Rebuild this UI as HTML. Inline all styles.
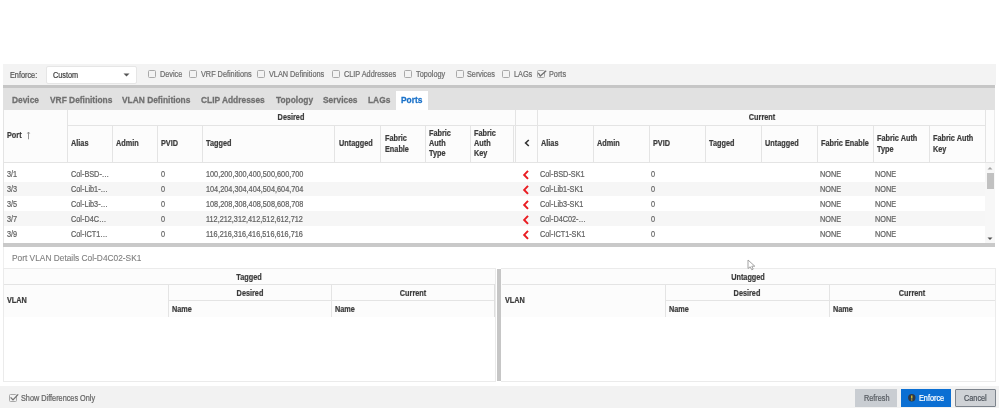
<!DOCTYPE html>
<html><head><meta charset="utf-8">
<style>
*{box-sizing:border-box;margin:0;padding:0}
html,body{width:999px;height:408px;overflow:hidden;background:#fff;font-family:"Liberation Sans",sans-serif}
body{filter:blur(0.45px)}
.a{position:absolute}
.t{-webkit-text-stroke:0.2px currentColor;will-change:transform;position:absolute;white-space:nowrap;font-size:7.3px;line-height:10px;color:#646464;transform:scaleY(1.18);transform-origin:0 0}
.h{-webkit-text-stroke:0.2px currentColor;will-change:transform;position:absolute;white-space:nowrap;font-size:7.3px;line-height:10px;color:#3c3c3c;font-weight:bold;transform:scaleY(1.18);transform-origin:0 0}
.hc{transform-origin:50% 0;text-align:center}
.tab{-webkit-text-stroke:0.25px currentColor;will-change:transform;position:absolute;white-space:nowrap;font-size:8.4px;line-height:12px;color:#707070;font-weight:bold;transform:scaleY(1.15);transform-origin:0 0}
.vl{position:absolute;width:1px;background:#e4e4e4}
.hl{position:absolute;height:1px;background:#e4e4e4}
.cb{position:absolute;width:8px;height:7.8px;border:1px solid #a9a9a9;border-radius:1.5px;background:transparent}
.stripe{position:absolute;left:4px;width:981px;background:#f6f6f6}
</style></head><body>
<div class="a" style="left:3px;top:63.5px;width:992.5px;height:21.5px;background:#f3f3f3;"></div>
<div class="t" style="left:10.3px;top:70px;color:#555;">Enforce:</div>
<div class="a" style="left:46px;top:65.5px;width:90.5px;height:18px;background:#fff;border:1px solid #e6e6e6;border-radius:2px"></div>
<div class="t" style="left:52.5px;top:70px;color:#444;">Custom</div>
<svg class="a" style="left:123px;top:73px" width="7" height="4"><path d="M0.5 0.5 L6.5 0.5 L3.5 3.5Z" fill="#555"/></svg>
<div class="cb" style="left:147.5px;top:70.2px"></div>
<div class="t" style="left:159.6px;top:69px;color:#6e6e6e;">Device</div>
<div class="cb" style="left:188.5px;top:70.2px"></div>
<div class="t" style="left:200.6px;top:69px;color:#6e6e6e;">VRF Definitions</div>
<div class="cb" style="left:257px;top:70.2px"></div>
<div class="t" style="left:269px;top:69px;color:#6e6e6e;">VLAN Definitions</div>
<div class="cb" style="left:332px;top:70.2px"></div>
<div class="t" style="left:344px;top:69px;color:#6e6e6e;">CLIP Addresses</div>
<div class="cb" style="left:403.7px;top:70.2px"></div>
<div class="t" style="left:416px;top:69px;color:#6e6e6e;">Topology</div>
<div class="cb" style="left:455.5px;top:70.2px"></div>
<div class="t" style="left:467px;top:69px;color:#6e6e6e;">Services</div>
<div class="cb" style="left:502px;top:70.2px"></div>
<div class="t" style="left:513.5px;top:69px;color:#6e6e6e;">LAGs</div>
<div class="cb" style="left:537px;top:70.2px"></div>
<div class="t" style="left:548.5px;top:69px;color:#6e6e6e;">Ports</div>
<svg class="a" style="left:536px;top:69px" width="12" height="9"><path d="M2.3 3.9 L4.3 7 L10.2 1.8" fill="none" stroke="#707070" stroke-width="1.25"/></svg>
<div class="a" style="left:3px;top:85px;width:992px;height:3px;background:#c6c6c6;"></div>
<div class="a" style="left:3px;top:88px;width:992px;height:22px;background:#e1e1e1;"></div>
<div class="a" style="left:396px;top:90.7px;width:31.5px;height:19.3px;background:#fff;"></div>
<div class="tab" style="left:12px;top:93px">Device</div>
<div class="tab" style="left:49.5px;top:93px">VRF Definitions</div>
<div class="tab" style="left:122px;top:93px">VLAN Definitions</div>
<div class="tab" style="left:201px;top:93px">CLIP Addresses</div>
<div class="tab" style="left:276px;top:93px">Topology</div>
<div class="tab" style="left:323px;top:93px">Services</div>
<div class="tab" style="left:368px;top:93px">LAGs</div>
<div class="tab" style="left:401px;top:93px;color:#1b72c9">Ports</div>
<div class="a" style="left:3px;top:110px;width:992px;height:133.5px;background:#fff;"></div>
<div class="a" style="left:3px;top:110px;width:992px;height:53px;background:#fcfcfc;"></div>
<div class="vl" style="left:3px;top:110px;height:134px;"></div>
<div class="hl" style="left:67px;top:125px;width:918px;"></div>
<div class="hl" style="left:3px;top:162px;width:992px;"></div>
<div class="vl" style="left:67px;top:110px;height:53px;"></div>
<div class="vl" style="left:112px;top:125px;height:38px;"></div>
<div class="vl" style="left:157px;top:125px;height:38px;"></div>
<div class="vl" style="left:202px;top:125px;height:38px;"></div>
<div class="vl" style="left:334px;top:125px;height:38px;"></div>
<div class="vl" style="left:380px;top:125px;height:38px;"></div>
<div class="vl" style="left:425px;top:125px;height:38px;"></div>
<div class="vl" style="left:470px;top:125px;height:38px;"></div>
<div class="vl" style="left:513px;top:125px;height:38px;"></div>
<div class="vl" style="left:593px;top:125px;height:38px;"></div>
<div class="vl" style="left:649px;top:125px;height:38px;"></div>
<div class="vl" style="left:705px;top:125px;height:38px;"></div>
<div class="vl" style="left:761px;top:125px;height:38px;"></div>
<div class="vl" style="left:817px;top:125px;height:38px;"></div>
<div class="vl" style="left:873px;top:125px;height:38px;"></div>
<div class="vl" style="left:929px;top:125px;height:38px;"></div>
<div class="vl" style="left:515px;top:110px;height:53px;"></div>
<div class="vl" style="left:537px;top:110px;height:53px;"></div>
<div class="vl" style="left:985px;top:110px;height:53px;"></div>
<div class="vl" style="left:994px;top:110px;height:53px;background:#ececec"></div>
<div class="h" style="left:7.1px;top:130px;">Port</div>
<svg class="a" style="left:25.8px;top:130.8px" width="5" height="9"><path d="M2.5 1 V8.3 M1.3 2.6 L2.5 1 L3.7 2.6" fill="none" stroke="#888" stroke-width="0.9"/></svg>
<div class="h hc" style="left:191px;top:112px;width:200px;">Desired</div>
<div class="h hc" style="left:661.5px;top:112px;width:200px;">Current</div>
<div class="h" style="left:71px;top:138px;">Alias</div>
<div class="h" style="left:115.6px;top:138px;">Admin</div>
<div class="h" style="left:161px;top:138px;">PVID</div>
<div class="h" style="left:206px;top:138px;">Tagged</div>
<div class="h" style="left:339px;top:138px;">Untagged</div>
<div class="h" style="left:540.5px;top:138px;">Alias</div>
<div class="h" style="left:596.5px;top:138px;">Admin</div>
<div class="h" style="left:653px;top:138px;">PVID</div>
<div class="h" style="left:709px;top:138px;">Tagged</div>
<div class="h" style="left:765px;top:138px;">Untagged</div>
<div class="h" style="left:821px;top:138px;">Fabric Enable</div>
<div class="h" style="left:384.5px;top:133px;">Fabric</div>
<div class="h" style="left:384.5px;top:143.5px;">Enable</div>
<div class="h" style="left:429.3px;top:127.5px;">Fabric</div>
<div class="h" style="left:429.3px;top:137.95px;">Auth</div>
<div class="h" style="left:429.3px;top:148.4px;">Type</div>
<div class="h" style="left:474px;top:127.5px;">Fabric</div>
<div class="h" style="left:474px;top:137.95px;">Auth</div>
<div class="h" style="left:474px;top:148.4px;">Key</div>
<div class="h" style="left:877px;top:133px;">Fabric Auth</div>
<div class="h" style="left:877px;top:143.5px;">Type</div>
<div class="h" style="left:933px;top:133px;">Fabric Auth</div>
<div class="h" style="left:933px;top:143.5px;">Key</div>
<svg class="a" style="left:524px;top:139px" width="6" height="8"><path d="M4.8 1 L1.6 4 L4.8 7" fill="none" stroke="#333" stroke-width="1.6"/></svg>
<div class="stripe" style="top:181.8px;height:14.6px"></div>
<div class="stripe" style="top:211.4px;height:14.7px"></div>
<div class="t" style="left:7px;top:169px;">3/1</div>
<div class="t" style="left:71px;top:169px;">Col-BSD-…</div>
<div class="t" style="left:160.6px;top:169px;">0</div>
<div class="t" style="left:206px;top:169px;">100,200,300,400,500,600,700</div>
<svg class="a" style="left:522px;top:169.6px" width="8" height="10"><path d="M6 0.9 L2.2 4.9 L6 8.9" fill="none" stroke="#ea1c22" stroke-width="2"/></svg>
<div class="t" style="left:540.3px;top:169px;">Col-BSD-SK1</div>
<div class="t" style="left:651.1px;top:169px;">0</div>
<div class="t" style="left:819.5px;top:169px;">NONE</div>
<div class="t" style="left:875.1px;top:169px;">NONE</div>
<div class="t" style="left:7px;top:184px;">3/3</div>
<div class="t" style="left:71px;top:184px;">Col-Lib1-…</div>
<div class="t" style="left:160.6px;top:184px;">0</div>
<div class="t" style="left:206px;top:184px;">104,204,304,404,504,604,704</div>
<svg class="a" style="left:522px;top:184.6px" width="8" height="10"><path d="M6 0.9 L2.2 4.9 L6 8.9" fill="none" stroke="#ea1c22" stroke-width="2"/></svg>
<div class="t" style="left:540.3px;top:184px;">Col-Lib1-SK1</div>
<div class="t" style="left:651.1px;top:184px;">0</div>
<div class="t" style="left:819.5px;top:184px;">NONE</div>
<div class="t" style="left:875.1px;top:184px;">NONE</div>
<div class="t" style="left:7px;top:199px;">3/5</div>
<div class="t" style="left:71px;top:199px;">Col-Lib3-…</div>
<div class="t" style="left:160.6px;top:199px;">0</div>
<div class="t" style="left:206px;top:199px;">108,208,308,408,508,608,708</div>
<svg class="a" style="left:522px;top:199.6px" width="8" height="10"><path d="M6 0.9 L2.2 4.9 L6 8.9" fill="none" stroke="#ea1c22" stroke-width="2"/></svg>
<div class="t" style="left:540.3px;top:199px;">Col-Lib3-SK1</div>
<div class="t" style="left:651.1px;top:199px;">0</div>
<div class="t" style="left:819.5px;top:199px;">NONE</div>
<div class="t" style="left:875.1px;top:199px;">NONE</div>
<div class="t" style="left:7px;top:214px;">3/7</div>
<div class="t" style="left:71px;top:214px;">Col-D4C…</div>
<div class="t" style="left:160.6px;top:214px;">0</div>
<div class="t" style="left:206px;top:214px;">112,212,312,412,512,612,712</div>
<svg class="a" style="left:522px;top:214.6px" width="8" height="10"><path d="M6 0.9 L2.2 4.9 L6 8.9" fill="none" stroke="#ea1c22" stroke-width="2"/></svg>
<div class="t" style="left:540.3px;top:214px;">Col-D4C02-…</div>
<div class="t" style="left:651.1px;top:214px;">0</div>
<div class="t" style="left:819.5px;top:214px;">NONE</div>
<div class="t" style="left:875.1px;top:214px;">NONE</div>
<div class="t" style="left:7px;top:229px;">3/9</div>
<div class="t" style="left:71px;top:229px;">Col-ICT1…</div>
<div class="t" style="left:160.6px;top:229px;">0</div>
<div class="t" style="left:206px;top:229px;">116,216,316,416,516,616,716</div>
<svg class="a" style="left:522px;top:229.6px" width="8" height="10"><path d="M6 0.9 L2.2 4.9 L6 8.9" fill="none" stroke="#ea1c22" stroke-width="2"/></svg>
<div class="t" style="left:540.3px;top:229px;">Col-ICT1-SK1</div>
<div class="t" style="left:651.1px;top:229px;">0</div>
<div class="t" style="left:819.5px;top:229px;">NONE</div>
<div class="t" style="left:875.1px;top:229px;">NONE</div>
<div class="a" style="left:985px;top:163px;width:10px;height:80.5px;background:#f7f7f7;"></div>
<div class="a" style="left:986.5px;top:173px;width:7px;height:15.7px;background:#c1c1c1;"></div>
<svg class="a" style="left:987px;top:166px" width="6" height="4"><path d="M0.5 3.5 L3 1 L5.5 3.5Z" fill="#a3a3a3"/></svg>
<svg class="a" style="left:987px;top:236.5px" width="6" height="4"><path d="M0.5 0.5 L3 3 L5.5 0.5Z" fill="#505050"/></svg>
<div class="a" style="left:3px;top:243.4px;width:992px;height:3.3px;background:#c9c9c9;"></div>
<div class="vl" style="left:3px;top:246.7px;height:21.5px;background:#efefef"></div>
<div class="a" style="will-change:transform;left:12.2px;top:251px;font-size:8.35px;line-height:12px;color:#7e7e7e;-webkit-text-stroke:0.1px currentColor;white-space:nowrap;transform:scaleY(1.15);transform-origin:0 0">Port VLAN Details Col-D4C02-SK1</div>
<div class="a" style="left:3px;top:268px;width:492.8px;height:113.5px;background:transparent;border:1px solid #ebebeb;"></div>
<div class="a" style="left:4px;top:269px;width:490.8px;height:48px;background:#fcfcfc;"></div>
<div class="hl" style="left:4px;top:284px;width:490.8px;"></div>
<div class="hl" style="left:168px;top:300px;width:326.8px;"></div>
<div class="vl" style="left:168px;top:284px;height:33px;"></div>
<div class="vl" style="left:331px;top:284px;height:33px;"></div>
<div class="h hc" style="left:149.4px;top:272px;width:200px;">Tagged</div>
<div class="h" style="left:7px;top:295px;">VLAN</div>
<div class="h hc" style="left:149.5px;top:288px;width:200px;">Desired</div>
<div class="h hc" style="left:313.4px;top:288px;width:200px;">Current</div>
<div class="h" style="left:171.6px;top:304px;">Name</div>
<div class="h" style="left:334.6px;top:304px;">Name</div>
<div class="vl" style="left:494px;top:284px;height:33px;background:#dedede"></div>
<div class="a" style="left:497px;top:268.8px;width:4.2px;height:112.7px;background:#c6c6c6;"></div>
<div class="a" style="left:501px;top:268px;width:494.5px;height:113.5px;background:transparent;border:1px solid #ebebeb;border-left:none;"></div>
<div class="a" style="left:501px;top:269px;width:493.5px;height:48px;background:#fcfcfc;"></div>
<div class="hl" style="left:502px;top:284px;width:492.5px;"></div>
<div class="hl" style="left:665px;top:300px;width:329.5px;"></div>
<div class="vl" style="left:665px;top:284px;height:33px;"></div>
<div class="vl" style="left:829px;top:284px;height:33px;"></div>
<div class="h hc" style="left:648.25px;top:272px;width:200px;">Untagged</div>
<div class="h" style="left:505px;top:295px;">VLAN</div>
<div class="h hc" style="left:647.0px;top:288px;width:200px;">Desired</div>
<div class="h hc" style="left:812.25px;top:288px;width:200px;">Current</div>
<div class="h" style="left:668.6px;top:304px;">Name</div>
<div class="h" style="left:832.6px;top:304px;">Name</div>
<svg class="a" style="left:746.5px;top:258.8px" width="10" height="12"><path d="M1 1 V9.5 L3.2 7.8 L4.8 10.8 L6.2 10.1 L4.8 7.2 L7.8 7.2 Z" fill="#fff" stroke="#999" stroke-width="0.9"/></svg>
<div class="a" style="left:0px;top:385.5px;width:999px;height:22.5px;background:#f2f2f2;"></div>
<div class="cb" style="left:8.5px;top:394px;width:8.5px;height:7.6px;border-color:#a8a8a8"></div>
<svg class="a" style="left:9px;top:392px" width="11" height="10"><path d="M1.6 5.4 L4 7.9 L9.2 2.4" fill="none" stroke="#727272" stroke-width="1.3"/></svg>
<div class="t" style="left:20.6px;top:393px;color:#666;">Show Differences Only</div>
<div class="a" style="left:855.3px;top:389.2px;width:41.8px;height:17.6px;background:#c9cdd2;"></div>
<div class="t" style="left:864px;top:393px;color:#585d63;">Refresh</div>
<div class="a" style="left:901px;top:389.2px;width:50px;height:17.6px;background:#0b6fd3;"></div>
<svg class="a" style="left:907.5px;top:394px" width="8" height="8"><circle cx="3.8" cy="3.8" r="3.7" fill="#313845"/><path d="M3.8 1.5 V4.6" stroke="#f3e02c" stroke-width="1.15"/><circle cx="3.8" cy="5.9" r="0.6" fill="#f3e02c"/></svg>
<div class="t" style="left:918.9px;top:393px;color:#fff;">Enforce</div>
<div class="a" style="left:955px;top:388.7px;width:41.2px;height:18px;background:#cfd2d6;border:1.3px solid #7c838c;border-radius:1px"></div>
<div class="t" style="left:964px;top:393px;color:#50565e;">Cancel</div>
</body></html>
